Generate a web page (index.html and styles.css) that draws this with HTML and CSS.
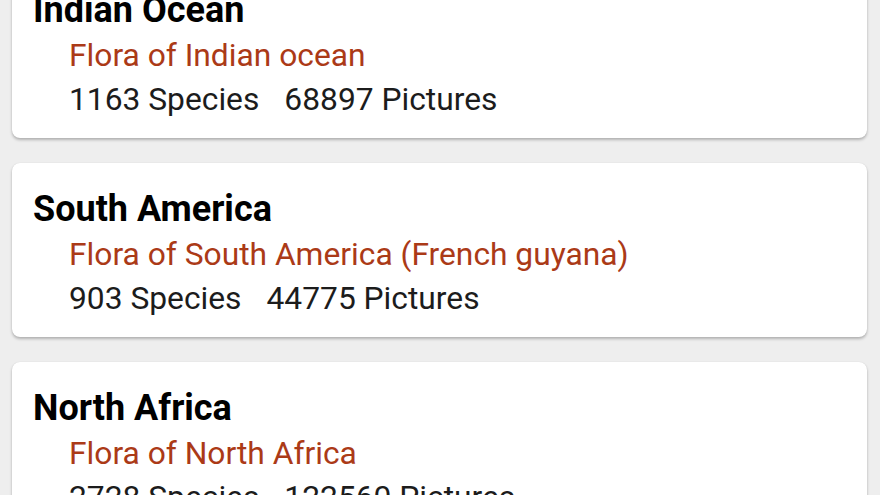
FILE: index.html
```html
<!DOCTYPE html>
<html>
<head>
<meta charset="utf-8">
<link rel="stylesheet" href="styles.css">
</head>
<body>
<div class="list">
  <div class="card">
    <div class="title">Indian Ocean</div>
    <div class="sub">Flora of Indian ocean</div>
    <div class="count"><span>1163 Species</span><span>68897 Pictures</span></div>
  </div>
  <div class="card">
    <div class="title">South America</div>
    <div class="sub">Flora of South America (French guyana)</div>
    <div class="count"><span>903 Species</span><span>44775 Pictures</span></div>
  </div>
  <div class="card">
    <div class="title">North Africa</div>
    <div class="sub">Flora of North Africa</div>
    <div class="count"><span>2728 Species</span><span>122560 Pictures</span></div>
  </div>
</div>
</body>
</html>
```

FILE: styles.css
```css
html, body {
  margin: 0;
  padding: 0;
  background: #eeeeee;
  overflow: hidden;
  height: 495px;
}
.list {
  display: flex;
  flex-direction: column;
  gap: 25px;
  padding: 0 13px 0 12px;
  margin-top: -36px;
}
.card {
  background: #ffffff;
  border-radius: 8px;
  box-shadow: 0 2px 3px rgba(0,0,0,0.25), 0 0 1px rgba(0,0,0,0.12);
  padding: 24px 21px 0 21px;
  height: 150px;
  font-family: Roboto, "Noto Sans", sans-serif;
}
.title {
  font-weight: bold;
  font-size: 36px;
  line-height: 44px;
  color: #000000;
}
.sub {
  font-size: 31.75px;
  line-height: 44px;
  color: #ab3a17;
  padding-left: 36px;
  margin-top: 2px;
}
.count {
  font-size: 31.75px;
  line-height: 43px;
  color: #1c1c1c;
  padding-left: 36px;
  display: flex;
  gap: 25px;
}
```
